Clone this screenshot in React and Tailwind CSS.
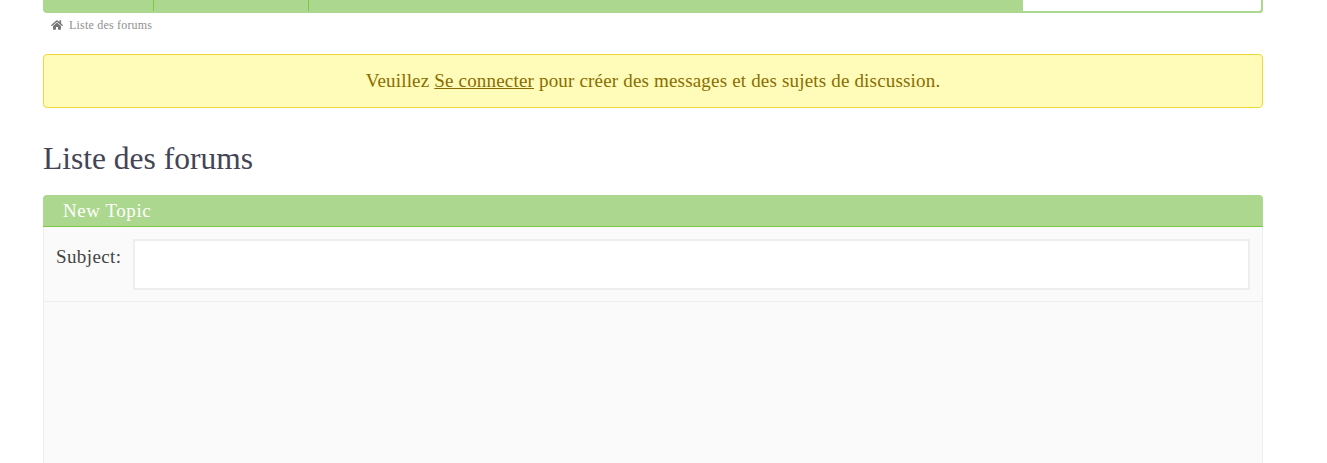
import { FaHome } from "react-icons/fa";

const serif = "font-['Liberation_Serif',serif]";

const TopNav = () => (
  <div className="flex h-[13px] rounded-b-[4px] bg-[#acd78e]">
    <div className="h-[11px] w-[111px] border-r border-[#7cc83f]" />
    <div className="h-[11px] w-[155px] border-r border-[#7cc83f]" />
    <div className="flex-1" />
    <div className="h-[13px] w-[240px] rounded-br-[4px] border-r-2 border-b-2 border-[#acd78e] bg-white" />
  </div>
);

const Breadcrumb = () => (
  <div className="flex h-[24px] items-center pl-2 text-[12px] tracking-[0.2px] text-[#8f8f8f]">
    <FaHome className="mr-[6px] h-[12px] w-[12px] text-[#777777]" />
    <span>Liste des forums</span>
  </div>
);

const App = () => {
  return (
    <div className={`h-[463px] overflow-hidden bg-white ${serif}`}>
      <div className="ml-[43px] w-[1220px]">
        <TopNav />
        <Breadcrumb />

        <div className="mt-[17px] flex h-[54px] items-center justify-center rounded-[4px] border border-[#ecd83a] bg-[#fffbb9] text-[19px] tracking-[0.18px] text-[#8a6d00]">
          <span>
            Veuillez <a href="#" className="underline">Se connecter</a> pour créer des messages et des sujets de discussion.
          </span>
        </div>

        <h1 className="mt-[32px] h-[41px] text-[31.5px] leading-[38px] text-[#444455]">Liste des forums</h1>

        <div className="mt-[14px]">
          <div className="flex h-[32px] items-center rounded-t-[4px] border-b border-[#7cc83f] bg-[#acd78e] pt-[2px] pl-[20px] text-[19px] tracking-[0.55px] text-white">
            New Topic
          </div>
          <div className="h-[236px] border-x border-[#eeeeee] bg-[#fafafa]">
            <div className="flex h-[75px] border-b border-[#eeeeee] pt-[12px] pl-[12px]">
              <label className="w-[77px] text-[19px] leading-[35px] tracking-[0.4px] text-[#444444]">Subject:</label>
              <input className="h-[51px] w-[1117px] border-2 border-[#eeeeee] bg-white" />
            </div>
          </div>
        </div>
      </div>
    </div>
  );
};

export default App;
